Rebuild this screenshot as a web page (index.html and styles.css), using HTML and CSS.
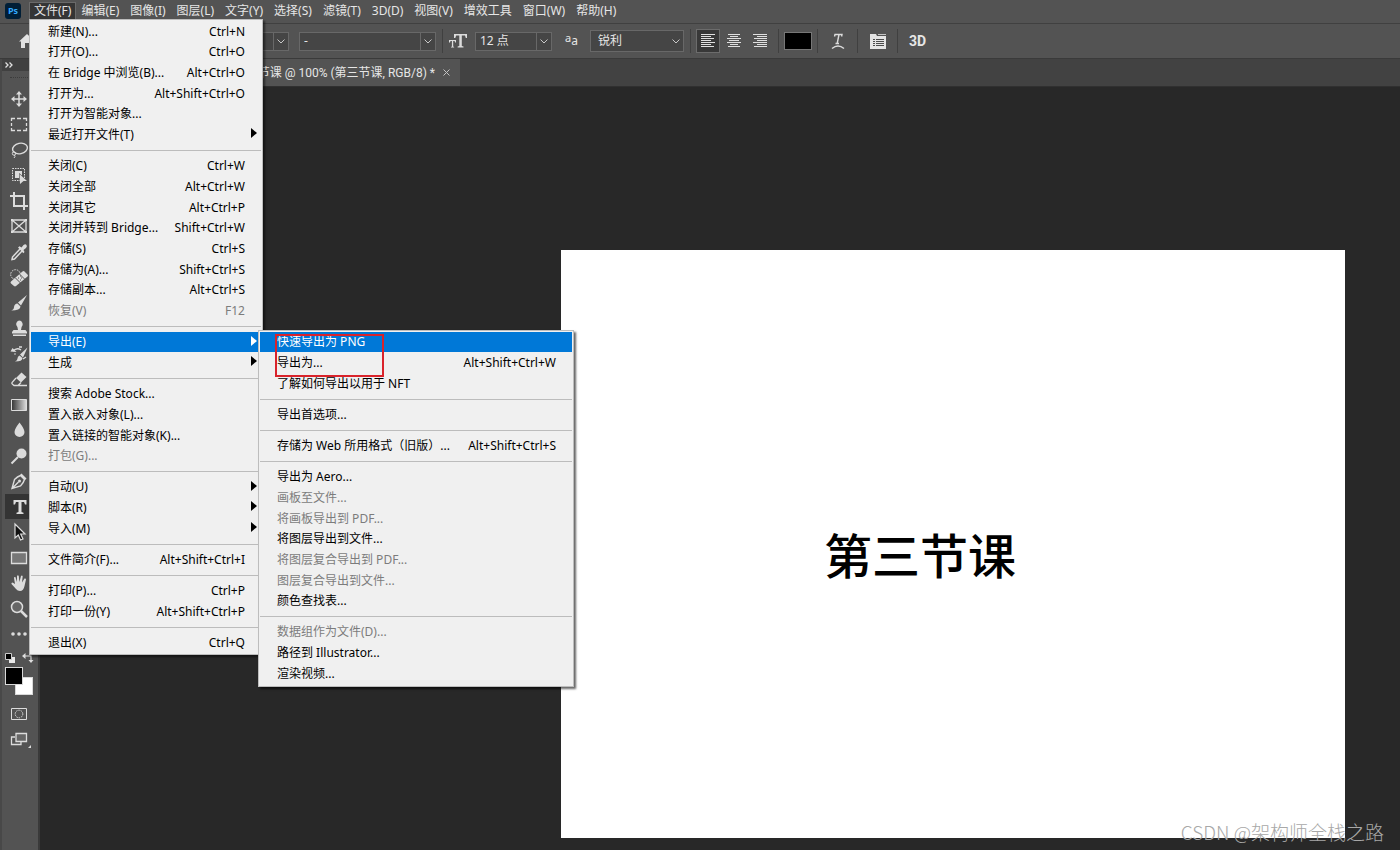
FILE: index.html
```html
<!DOCTYPE html>
<html lang="zh-CN">
<head>
<meta charset="utf-8">
<title>Photoshop</title>
<link rel="stylesheet" href="styles.css">
</head>
<body>
<header class="menubar">
  <svg class="logo" viewBox="0 0 16 16" aria-hidden="true"><rect width="16" height="16" rx="3" fill="#001e36"/><text x="8" y="11" text-anchor="middle" class="logo-text">Ps</text></svg>
  <nav>
    <ul class="menus">
      <li class="menu-host"><button class="menu-title open">文件(F)</button>
        <div class="menu file-menu">
          <ul class="group">
            <li><button>新建(N)...<kbd>Ctrl+N</kbd></button></li>
            <li><button>打开(O)...<kbd>Ctrl+O</kbd></button></li>
            <li><button>在 Bridge 中浏览(B)...<kbd>Alt+Ctrl+O</kbd></button></li>
            <li><button>打开为...<kbd>Alt+Shift+Ctrl+O</kbd></button></li>
            <li><button>打开为智能对象...</button></li>
            <li><button class="has-sub">最近打开文件(T)</button></li>
          </ul>
          <hr>
          <ul class="group">
            <li><button>关闭(C)<kbd>Ctrl+W</kbd></button></li>
            <li><button>关闭全部<kbd>Alt+Ctrl+W</kbd></button></li>
            <li><button>关闭其它<kbd>Alt+Ctrl+P</kbd></button></li>
            <li><button>关闭并转到 Bridge...<kbd>Shift+Ctrl+W</kbd></button></li>
            <li><button>存储(S)<kbd>Ctrl+S</kbd></button></li>
            <li><button>存储为(A)...<kbd>Shift+Ctrl+S</kbd></button></li>
            <li><button>存储副本...<kbd>Alt+Ctrl+S</kbd></button></li>
            <li><button disabled>恢复(V)<kbd>F12</kbd></button></li>
          </ul>
          <hr>
          <ul class="group">
            <li class="sub-host"><button class="has-sub active">导出(E)</button>
              <div class="menu sub-menu">
                <ul class="group">
                  <li><button class="active">快速导出为 PNG</button></li>
                  <li><button>导出为...<kbd>Alt+Shift+Ctrl+W</kbd></button></li>
                  <li><button>了解如何导出以用于 NFT</button></li>
                </ul>
                <hr>
                <ul class="group"><li><button>导出首选项...</button></li></ul>
                <hr>
                <ul class="group"><li><button>存储为 Web 所用格式（旧版）...<kbd>Alt+Shift+Ctrl+S</kbd></button></li></ul>
                <hr>
                <ul class="group">
                  <li><button>导出为 Aero...</button></li>
                  <li><button disabled>画板至文件...</button></li>
                  <li><button disabled>将画板导出到 PDF...</button></li>
                  <li><button>将图层导出到文件...</button></li>
                  <li><button disabled>将图层复合导出到 PDF...</button></li>
                  <li><button disabled>图层复合导出到文件...</button></li>
                  <li><button>颜色查找表...</button></li>
                </ul>
                <hr>
                <ul class="group">
                  <li><button disabled>数据组作为文件(D)...</button></li>
                  <li><button>路径到 Illustrator...</button></li>
                  <li><button>渲染视频...</button></li>
                </ul>
                <span class="highlight-box"></span>
              </div>
            </li>
            <li><button class="has-sub">生成</button></li>
          </ul>
          <hr>
          <ul class="group">
            <li><button>搜索 Adobe Stock...</button></li>
            <li><button>置入嵌入对象(L)...</button></li>
            <li><button>置入链接的智能对象(K)...</button></li>
            <li><button disabled>打包(G)...</button></li>
          </ul>
          <hr>
          <ul class="group">
            <li><button class="has-sub">自动(U)</button></li>
            <li><button class="has-sub">脚本(R)</button></li>
            <li><button class="has-sub">导入(M)</button></li>
          </ul>
          <hr>
          <ul class="group"><li><button>文件简介(F)...<kbd>Alt+Shift+Ctrl+I</kbd></button></li></ul>
          <hr>
          <ul class="group">
            <li><button>打印(P)...<kbd>Ctrl+P</kbd></button></li>
            <li><button>打印一份(Y)<kbd>Alt+Shift+Ctrl+P</kbd></button></li>
          </ul>
          <hr>
          <ul class="group"><li><button>退出(X)<kbd>Ctrl+Q</kbd></button></li></ul>
        </div>
      </li>
      <li><button class="menu-title">编辑(E)</button></li>
      <li><button class="menu-title">图像(I)</button></li>
      <li><button class="menu-title">图层(L)</button></li>
      <li><button class="menu-title">文字(Y)</button></li>
      <li><button class="menu-title">选择(S)</button></li>
      <li><button class="menu-title">滤镜(T)</button></li>
      <li><button class="menu-title">3D(D)</button></li>
      <li><button class="menu-title">视图(V)</button></li>
      <li><button class="menu-title">增效工具</button></li>
      <li><button class="menu-title">窗口(W)</button></li>
      <li><button class="menu-title">帮助(H)</button></li>
    </ul>
  </nav>
</header>

<section class="options" aria-label="选项">
  <button class="icon-button" aria-label="主页"><svg width="16" height="16" viewBox="0 0 16 16"><path d="M8 1 0 8.500h2V15h4v-5h4v5h4V8.500h2z" fill="#e2e2e2"/></svg></button>
  <span class="combo family"><select aria-label="字体"><option>黑体</option></select><svg viewBox="0 0 8 5"><path d="M.5.500 4 4 7.500.5"/></svg></span>
  <span class="combo style"><select aria-label="字体样式"><option>-</option></select><svg viewBox="0 0 8 5"><path d="M.5.500 4 4 7.500.5"/></svg></span>
  <i class="divider"></i>
  <svg class="size-icon" viewBox="0 0 18 14" fill="#dcdcdc" aria-hidden="true"><path d="M5 0h13v4h-1.200L16 1.600h-3.200V12l1.700.6v.9H8.600v-.9l1.700-.6V1.600H7.200L6.300 4H5z"/><path d="M0 6h7v2.500h-.9L5.600 7H4.200v5.500l.9.400v.6H2v-.6l.9-.4V7H1.500L1 8.500H0z"/></svg>
  <span class="combo size"><select aria-label="字体大小"><option>12 点</option></select><svg viewBox="0 0 8 5"><path d="M.5.500 4 4 7.500.5"/></svg></span>
  <span class="aa" aria-hidden="true"><sup>a</sup>a</span>
  <span class="combo plain"><select aria-label="消除锯齿"><option>锐利</option></select><svg viewBox="0 0 8 5"><path d="M.5.500 4 4 7.500.5"/></svg></span>
  <i class="divider"></i>
  <span class="aligns">
    <button class="icon-button pressed" aria-label="左对齐"><svg width="14" height="14" viewBox="0 0 14 14"><path d="M0 .5h14M0 2.500h10M0 4.500h13M0 6.500h10M0 8.500h14M0 10.500h10M0 12.500h13" stroke="#e0e0e0"/></svg></button>
    <button class="icon-button" aria-label="居中对齐"><svg width="14" height="14" viewBox="0 0 14 14"><path d="M1 .5h12M3 2.500h8M0 4.500h14M2 6.500h10M0 8.500h14M3 10.500h8M1 12.500h12" stroke="#e0e0e0"/></svg></button>
    <button class="icon-button" aria-label="右对齐"><svg width="14" height="14" viewBox="0 0 14 14"><path d="M0 .5h14M4 2.500h10M1 4.500h13M4 6.500h10M0 8.500h14M4 10.500h10M1 12.500h13" stroke="#e0e0e0"/></svg></button>
  </span>
  <i class="divider"></i>
  <button class="swatch" aria-label="文本颜色"></button>
  <i class="divider"></i>
  <button class="icon-button wide" aria-label="变形文字"><svg width="14" height="17" viewBox="0 0 14 17" fill="none" stroke="#dcdcdc"><path d="M3.500 3.500 4 1.500h7l-.4 2M8 1.500 6.200 10.500M4.500 10.500h3.500" stroke-width="1.400"/><path d="M1 15.500q6-5 12 0" stroke-width="1.500"/></svg></button>
  <i class="divider"></i>
  <button class="icon-button wide" aria-label="字符面板"><svg width="18" height="17" viewBox="0 0 18 17"><path d="M1 1h6l1 2h9v13H1z" fill="#e4e4e4"/><path d="M9 1h8v1H9z" fill="#c4c4c4"/><path d="M4 6.500h2M7 6.500h8M4 8.500h2M7 8.500h8M4 10.500h2M7 10.500h8M4 12.500h2M7 12.500h8" stroke="#4b4b4b"/></svg></button>
  <i class="divider"></i>
  <button class="three-d">3D</button>
</section>

<main class="workspace">
  <aside class="toolbar" aria-label="工具">
    <button class="expand" aria-label="展开面板"><svg width="8" height="6" viewBox="0 0 8 6"><path d="m.5.500 2.500 2.500L.5 5.500M4.500.500 7 3 4.500 5.500" fill="none" stroke="#e0e0e0" stroke-width="1.300"/></svg></button>
    <div class="grip"></div>
    <div class="tools">
      <button aria-label="移动"><svg viewBox="0 0 20 20"><path d="M10 3v14M3 10h14" stroke-width="1.500"/><path class="f" d="m10 2 3 3.500H7zM10 18l3-3.500H7zM2 10l3.500-3v6zM18 10l-3.500-3v6z"/></svg></button>
      <button aria-label="矩形选框"><svg viewBox="0 0 20 20"><path d="M2.500 7V4.500H6M8 4.500h4M14 4.500h3.500V7M17.500 9v3M17.500 14v2.500H14M12 16.500H8M6 16.500H2.500V14M2.500 12V9" stroke-width="1.300"/></svg></button>
      <button aria-label="套索"><svg viewBox="0 0 20 20"><ellipse cx="11" cy="8.500" rx="7.500" ry="5.200" transform="rotate(-12 11 8.500)" stroke-width="1.400"/><circle cx="5" cy="13.500" r="1.700"/><path d="M5.500 15q1.200 1.500-.5 3"/></svg></button>
      <button aria-label="对象选择"><svg viewBox="0 0 20 20"><path d="M3.500 3.500h12v12h-12z" stroke-dasharray="1.500 1"/><path class="f" d="M6 6h7v4.500L10 8v5H6z"/><path class="f" d="m10.500 9 7.500 7h-3.500l-3.500 3z"/></svg></button>
      <button aria-label="裁剪"><svg viewBox="0 0 20 20"><path d="M5 1v14h14M1 5h14v14" stroke-width="2"/></svg></button>
      <button aria-label="图框"><svg viewBox="0 0 20 20"><path d="M3 4h14v12H3zM3 4l14 12M17 4 3 16" stroke-width="1.300"/><path class="f" d="M2 3h2v2H2zM16 3h2v2h-2zM2 15h2v2H2zM16 15h2v2h-2z"/></svg></button>
      <button aria-label="吸管"><svg viewBox="0 0 20 20"><path d="m11 7-7.500 8-.5 2.500 2.500-.5L13 9" stroke-width="1.500"/><path class="f" d="m9 5.500 1.500-1.200 2 1.200 2-2.500q2-1.500 3 0t-.5 3L14.500 8l1 2-1.200 1.200z"/></svg></button>
      <button aria-label="污点修复"><svg viewBox="0 0 20 20"><circle cx="6.500" cy="7.500" r="4.800" stroke-dasharray="1.600 1"/><path class="f" d="m2 14.500 11.500-10q1-1 2 0l3 3q1 1 0 2L7 19q-1 .8-2 0l-3-2.500q-1-1 0-2z"/><path d="m6.500 11 5.500 5.500M10.500 7l5.500 5.500" stroke="#535353"/><path d="M9 11h1M12 11h1M11 9h1M11 13h1" stroke="#535353"/></svg></button>
      <button aria-label="画笔"><svg viewBox="0 0 20 20"><path class="f" d="m18 2-9 7.500 3 3zM8.500 10.500l3 3q0 4-9.500 4 3-1 3-3.500Q5.500 10.500 8.500 10.500z"/></svg></button>
      <button aria-label="仿制图章"><svg viewBox="0 0 20 20"><path class="f" d="M10 2.500a3.800 3.800 0 0 1 2.600 6.500L12 12h4.500l1.500 2v1.500H3V14l1.500-2H9l-.6-3A3.800 3.800 0 0 1 10 2.500zM4 16.500h13V18H4z"/></svg></button>
      <button aria-label="历史记录画笔"><svg viewBox="0 0 20 20"><path class="f" d="m18.500 3.500-7.500 7 3 3zM10.500 11.500l3 2.500q0 3.500-7.500 3.500 2.500-1 2.500-3 0-2 2-3z"/><path d="M4 7q4-4 8-1M10 3h3M14 15l3-2" stroke-width="1.300"/><path class="f" d="m1.500 7.500 6 .5-4-4z"/><circle class="f" cx="6" cy="10" r=".8"/></svg></button>
      <button aria-label="橡皮擦"><svg viewBox="0 0 20 20"><path class="f" d="m12.500 3.500 5 4.500-5.500 5.500-5-4.500z"/><path d="m7 9-4 4.500q-.5 1 .5 1.800l1.500 1.200h4l3-3M9 16.500h9" stroke-width="1.300"/></svg></button>
      <button aria-label="渐变"><svg viewBox="0 0 20 20"><defs><linearGradient id="fade"><stop stop-color="#333"/><stop offset="1" stop-color="#ddd"/></linearGradient></defs><path d="M2.500 4.500h15v11h-15z" fill="url(#fade)"/></svg></button>
      <button aria-label="模糊"><svg viewBox="0 0 20 20"><path class="f" d="M10.500 2.500q5 6.500 5 9.500a5 5 0 0 1-10 0q0-3 5-9.500z"/></svg></button>
      <button aria-label="减淡"><svg viewBox="0 0 20 20"><circle class="f" cx="12.500" cy="7.500" r="5"/><path d="m9 11-6.500 6.500" stroke-width="2"/></svg></button>
      <button aria-label="钢笔"><svg viewBox="0 0 20 20"><path d="m3 17.500 2.500-9q3-3 6-4l4 4q-1 3.500-4 6.500zm0 0L9.500 11" stroke-width="1.400"/><circle class="f" cx="10.500" cy="10" r="1.500"/><path class="f" d="m12.500 2.500 5 5-1.500 1.500-5-5z"/></svg></button>
      <button class="current" aria-label="横排文字"><svg viewBox="0 0 20 20"><path class="f" d="M4.500 3h13v4.500H16L15 5h-2.500v10l2 .8V17h-7v-1.200l2-.8V5H7L6 7.500H4.500z"/></svg></button>
      <button aria-label="路径选择"><svg viewBox="0 0 20 20"><path d="M6 2v14l3.300-3 2.200 5 2.500-1-2.300-5H16z" fill="#111" stroke-width="1.200"/></svg></button>
      <button aria-label="矩形"><svg viewBox="0 0 20 20"><path d="M2.500 4.500h15v11h-15z" fill="#777" stroke-width="1.300"/></svg></button>
      <button aria-label="抓手"><svg viewBox="0 0 20 20"><path class="f" d="M7 16 2.500 11q-.5-1.500 1-1.500L6 11 5 5q0-1.500 1.400-1L8 9V3q.9-1.500 1.800 0l.6 6L12 3q1.200-1 1.700.3L13 9.500l2.500-4q1.500-.5 1.500 1L15.500 13q-1 5-4.500 5-2.500 0-4-2z"/></svg></button>
      <button aria-label="缩放"><svg viewBox="0 0 20 20"><circle cx="8" cy="8" r="5.500" stroke-width="1.500" fill="#666"/><path d="m12 12 6 6" stroke-width="2.500"/></svg></button>
      <button aria-label="编辑工具栏"><svg viewBox="0 0 20 20"><circle class="f" cx="4" cy="10" r="1.800"/><circle class="f" cx="10" cy="10" r="1.800"/><circle class="f" cx="16" cy="10" r="1.800"/></svg></button>
    </div>
    <div class="color-actions">
      <button aria-label="默认颜色"><svg width="10" height="10" viewBox="0 0 10 10"><path d="M4 4h6v6H4z" fill="#e8e8e8"/><path d="M.5.500h6v6h-6z" fill="#000" stroke="#ccc"/></svg></button>
      <button aria-label="切换颜色"><svg width="12" height="10" viewBox="0 0 12 10"><path d="M2 3h7v6" fill="none" stroke="#ddd" stroke-width="1.200"/><path d="m0 3 3.500-3v6zM9 10 6.500 7h5z" fill="#ddd"/></svg></button>
    </div>
    <div class="colors"><span class="background"></span><span class="foreground"></span></div>
    <div class="modes">
      <button aria-label="快速蒙版"><svg viewBox="0 0 20 20"><path d="M2.500 4.500h15v11h-15z"/><circle cx="10" cy="10" r="3.800" stroke-dasharray="1.400 1"/></svg></button>
      <button aria-label="屏幕模式"><svg width="24" viewBox="0 0 24 20"><path d="M6 7H2.500v7.500H12V12" stroke-width="1.300"/><path d="M7 3.500h10.500v8H7z" fill="#666" stroke-width="1.300"/><path class="f" d="M22 15v3h-3z"/></svg></button>
    </div>
  </aside>
  <section class="stage">
    <div class="tabs">
      <div class="tab"><span>节课 @ 100% (第三节课, RGB/8) *</span><button aria-label="关闭"><svg width="7" height="7" viewBox="0 0 7 7"><path d="m.5.500 6 6M6.500.5l-6 6" stroke="#c4c4c4"/></svg></button></div>
    </div>
    <div class="canvas">
      <div class="document"><span class="type-layer">第三节课</span></div>
    </div>
  </section>
</main>
<div class="watermark">CSDN @架构师全栈之路</div>
</body>
</html>
```
FILE: styles.css
```css
* { box-sizing: border-box; }

body {
  margin: 0;
  min-height: 100vh;
  display: flex;
  flex-direction: column;
  position: relative;
  overflow: hidden;
  background: #535353;
  color: #e6e6e6;
  font: 12px/16px "Noto Sans", "Noto Sans CJK SC", sans-serif;
}

button, select {
  margin: 0;
  padding: 0;
  border: 0;
  background: none;
  color: inherit;
  font: inherit;
}

ul { margin: 0; padding: 0; list-style: none; }
svg { display: block; flex: none; }

/* Menu bar */
.menubar {
  height: 23px;
  display: flex;
  align-items: flex-start;
  padding: 3px 5px 0;
  gap: 9px;
}
.logo { width: 16px; height: 16px; }
.logo-text { font: bold 9px "Open Sans", sans-serif; fill: #31a8ff; }
.menus { display: flex; }
.menu-title { height: 16px; padding: 0 5px; white-space: nowrap; }
.menu-title + .menu-title { padding-left: 6px; }
.menus > li + li { padding-left: 1px; }
.menu-title.open { background: #353535; outline: 1px solid #6a6a6a; padding: 0 4px; }
.menu-host, .sub-host { position: relative; }

/* Drop-down menus */
.menu {
  position: absolute;
  background: #f0f0f0;
  border: 1px solid #bdbdbd;
  padding: 1px;
  color: #000;
}
.file-menu { z-index: 10; top: 16px; left: -1px; width: 234px; box-shadow: 2px 2px 2px rgba(0, 0, 0, .5); }
.sub-menu { z-index: 2; top: -2px; left: 227px; width: 316px; padding-bottom: 2px; box-shadow: 2px 2px 2px rgba(0, 0, 0, .6); }
.file-menu > .group:first-child { grid-auto-rows: 21px 20px 21px; }
.group { display: grid; grid-auto-rows: 20px 21px 21px; }
.group li { display: grid; }
.group button {
  position: relative;
  display: flex;
  justify-content: space-between;
  align-items: center;
  padding: 0 16px 0 17px;
  white-space: nowrap;
}
.group kbd { font: inherit; }
.group button:disabled { color: #7c7c7c; }
.group .active { background: #0078d7; color: #fff; }
.has-sub::after {
  content: "";
  position: absolute;
  right: 4px;
  top: 4px;
  border: solid transparent;
  border-width: 5px 0 5px 6px;
  border-left-color: currentColor;
}
.menu hr { height: 1px; margin: 5px 0; border: 0; background: #bcbcbc; }
.highlight-box {
  position: absolute;
  left: 16px;
  top: 3px;
  width: 109px;
  height: 43px;
  border: 2px solid #d9232b;
  pointer-events: none;
}

/* Options bar */
.options {
  height: 36px;
  display: flex;
  align-items: center;
  padding-left: 15px;
  border-top: 1px solid #404040;
  border-bottom: 1px solid #3a3a3a;
}
.icon-button { width: 24px; height: 24px; display: grid; place-items: center; }
.icon-button.pressed { background: #383838; outline: 1px solid #6c6c6c; outline-offset: -1px; }
.icon-button.wide { width: 39px; }
.divider { width: 1px; height: 24px; background: #404040; }
.combo { position: relative; height: 19px; }
.combo select {
  appearance: none;
  width: 100%;
  height: 100%;
  padding: 0 4px;
  background: #454545;
  border: 1px solid #686868;
}
.combo svg { position: absolute; right: 4px; top: 7px; width: 8px; height: 5px; fill: none; stroke: #c8c8c8; }
.combo::after { content: ""; position: absolute; right: 15px; top: 1px; bottom: 1px; width: 1px; background: #686868; }
.family { width: 230px; margin-left: 20px; }
.style { width: 137px; margin: 0 6px 0 10px; }
.size-icon { width: 18px; height: 14px; margin: 0 8px 0 6px; }
.size { width: 77px; }
.aa { width: 38px; padding-left: 13px; white-space: nowrap; }
.aa sup { font-size: 11px; line-height: 0; vertical-align: 3px; }
.plain { width: 94px; height: 22px; margin-right: 6px; }
.plain select { padding-left: 7px; }
.plain svg { top: 9px; }
.plain::after { display: none; }
.aligns { display: flex; gap: 2px; margin: 0 6px 0 5px; }
.swatch { width: 28px; height: 18px; margin: 0 5px; background: #000; border: 1px solid #777; }
.three-d { padding-left: 11px; font: bold 14px/16px Roboto, sans-serif; }

/* Workspace */
.workspace { flex: 1; display: flex; min-height: 0; }
.toolbar {
  width: 40px;
  flex: none;
  padding-bottom: 16px;
  border-left: 2px solid #484848;
  border-right: 2px solid #3a3a3a;
}
.expand { display: flex; align-items: center; width: 100%; height: 12px; padding-left: 3px; background: #404040; }
.grip { height: 6px; margin: 1px 8px 8px; border-bottom: 1px dotted #3c3c3c; }
.tools { display: grid; grid-auto-rows: 25px 26px; padding-left: 3px; }
.tools button { display: grid; align-items: center; padding-left: 4px; }
.tools .current { background: #343434; }
.tools svg, .modes svg { height: 20px; fill: none; stroke: #dcdcdc; }
.tools svg { width: 20px; }
.tools .current svg, .toolbar svg .f { fill: #dcdcdc; stroke: none; }
.color-actions { display: flex; gap: 7px; padding: 6px 3px 4px; }
.colors { position: relative; height: 29px; margin: 0 3px; }
.foreground, .background { position: absolute; width: 18px; height: 18px; border: 1px solid #d8d8d8; }
.foreground { left: 0; top: 0; background: #000; }
.background { left: 10px; top: 10px; background: #fff; }
.modes { display: grid; gap: 6px; padding: 8px 0 0 7px; }
.modes button { width: 20px; }

.stage { flex: 1; min-width: 0; display: flex; flex-direction: column; }
.tabs { height: 28px; display: flex; background: #424242; border-bottom: 1px solid #303030; }
.tab {
  width: 420px;
  display: flex;
  justify-content: flex-end;
  align-items: center;
  gap: 8px;
  padding-right: 10px;
  background: #535353;
  font-family: Roboto, "Noto Sans CJK SC", sans-serif;
}
.canvas { flex: 1; display: flex; padding: 163px 55px 12px 521px; background: #282828; }
.document { flex: 1; position: relative; background: #fff; }
.type-layer {
  position: absolute;
  left: 263px;
  top: 267px;
  color: #000;
  font: 500 48px/72px "Noto Sans CJK SC", sans-serif;
  white-space: nowrap;
}
.watermark {
  position: absolute;
  right: 16px;
  bottom: 5px;
  color: #a8a8a8;
  font: 300 19px/26px "Noto Sans CJK SC", sans-serif;
}
```
